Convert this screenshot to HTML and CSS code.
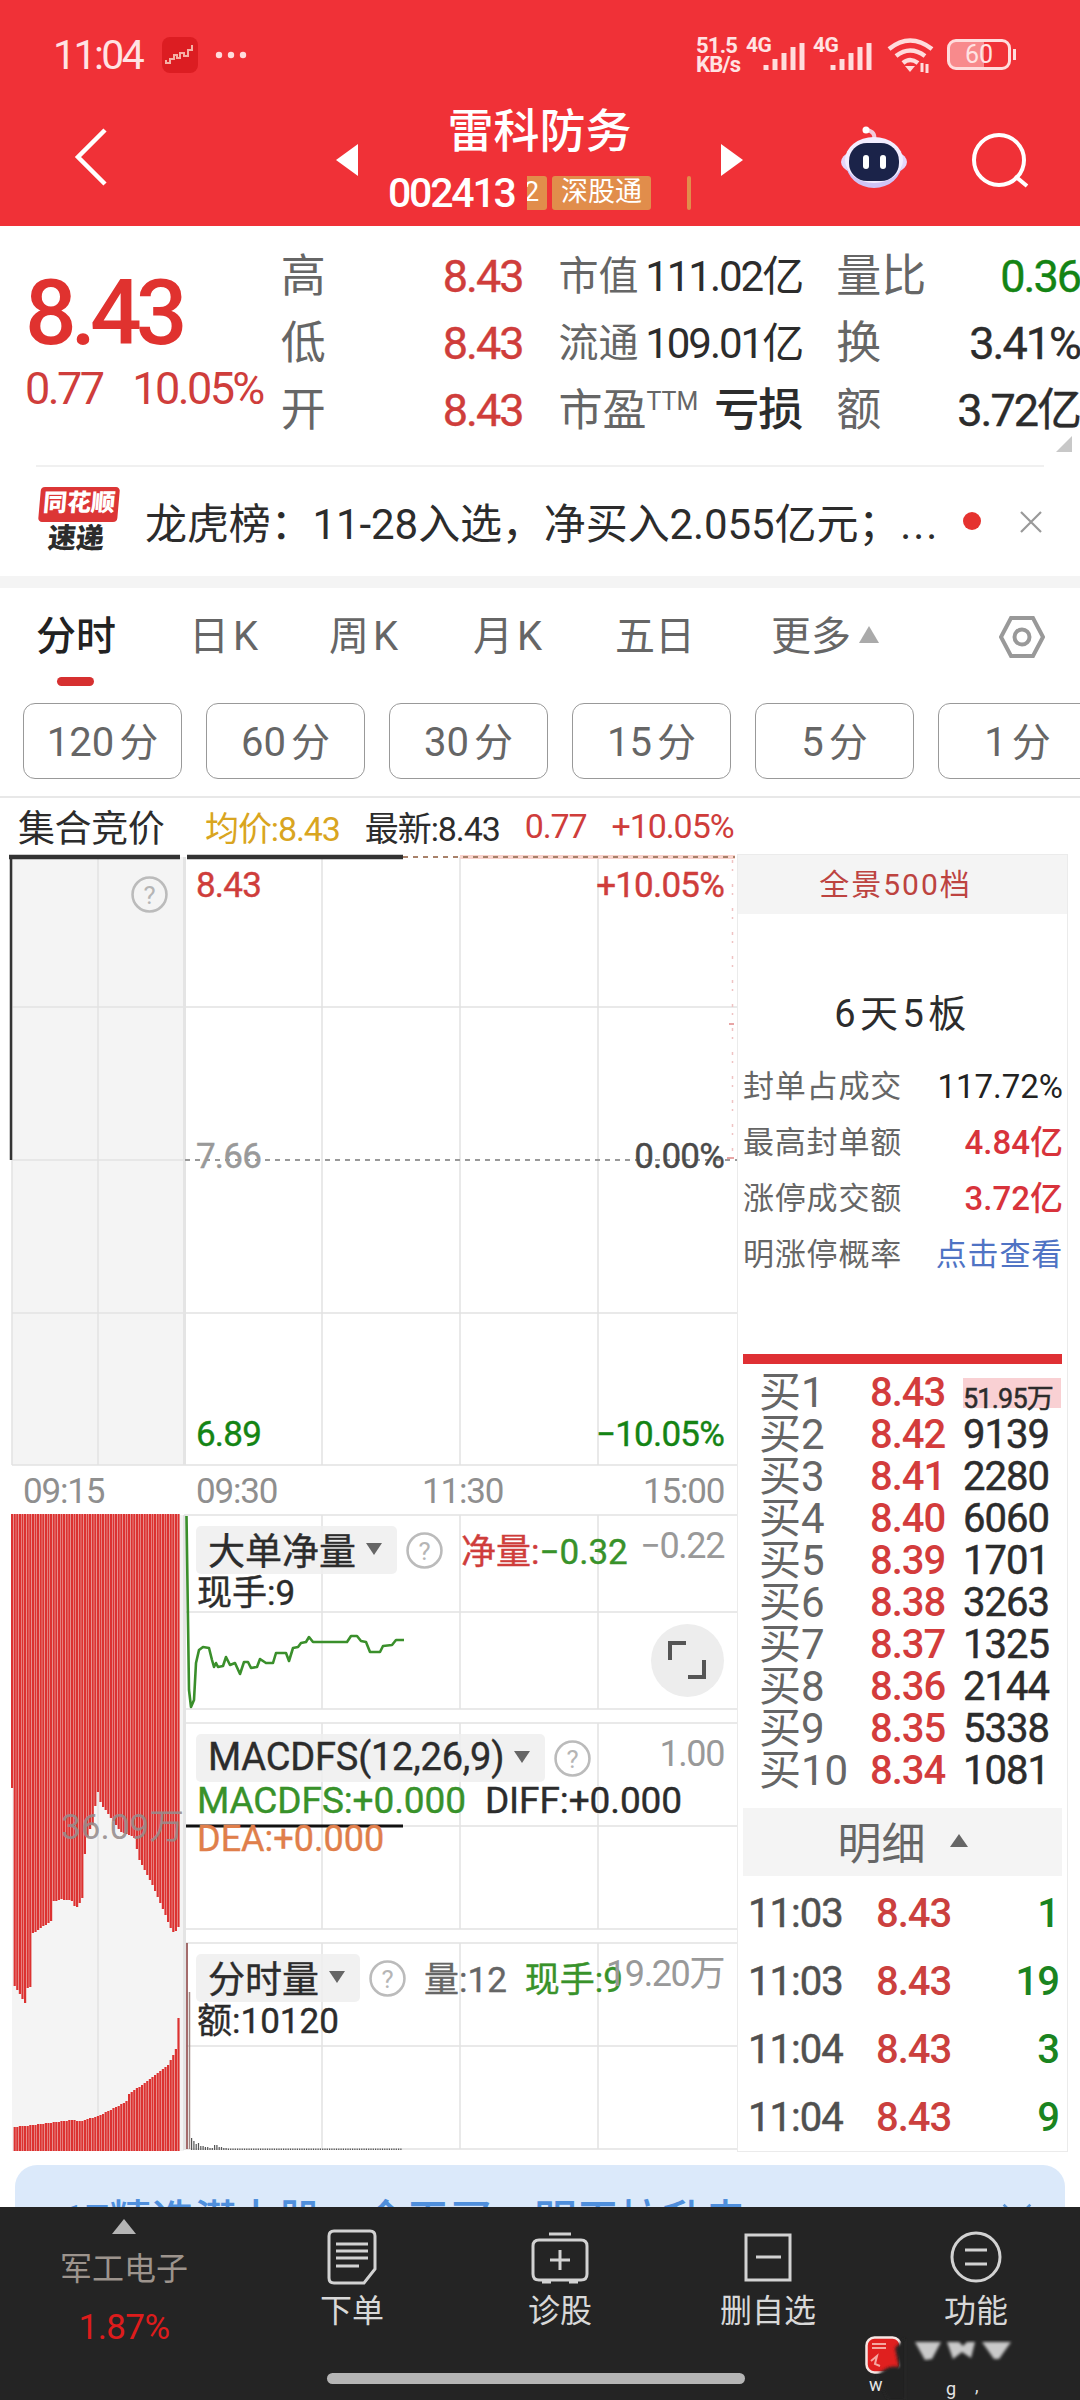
FILE: index.html
```html
<!DOCTYPE html>
<html lang="zh-CN">
<head>
  <meta charset="UTF-8" />
  <meta name="viewport" content="width=device-width, initial-scale=1.0"/>
  <title>雷科防务 002413</title>
  <link rel="stylesheet" href="styles.css">
</head>
<body>

  <header>
    <div class="status">
      <span class="clock">11:04</span>
      <svg class="app-icon" width="36" height="36" viewBox="0 0 36 36"><rect width="36" height="36" rx="8" fill="#dc1d22"/><path d="M4 23v3h4v-4h4v-4h3v3h3v-5h4v3h4v-6h4V8" fill="none" stroke="#f5b0a5" stroke-width="2"/></svg>
      <svg class="dots" width="32" height="8"><circle cx="4" cy="4" r="3.2"/><circle cx="16" cy="4" r="3.2"/><circle cx="28" cy="4" r="3.2"/></svg>
      <span class="speed">51.5<br>KB/s</span>
      <span class="sim">4G</span>
      <svg class="signal" width="44" height="36" viewBox="16 0 44 36"><path d="M19 33v-5M28 33V22M37 33V16M46 33V10M55 33V6"/></svg>
      <span class="sim">4G</span>
      <svg class="signal" width="44" height="36" viewBox="16 0 44 36"><path d="M19 33v-5M28 33V22M37 33V16M46 33V10M55 33V6"/></svg>
      <svg class="wifi" width="48" height="36" viewBox="0 0 48 36"><path d="M2 12Q23 -5 45 12M9 19Q23 8 38 19M16 26Q23 20 31 26" fill="none" stroke="#ffdcdc" stroke-width="4.5"/><path d="M18 29h10l-5 6z" fill="#ffdcdc"/><path d="M35 26v9M40 27v9" stroke="#ffdcdc" stroke-width="3"/></svg>
      <span class="battery">60</span>
    </div>
    <div class="titlebar">
      <svg class="back" width="34" height="60" viewBox="0 0 34 60"><path d="M31 3L4 30L31 57"/></svg>
      <svg class="prev" width="22" height="32"><path d="M22 0v32L0 16z" fill="#fff"/></svg>
      <div class="stock">
        <h1>雷科防务</h1>
        <div class="code-line">
          <span class="code">002413</span>
          <span class="tags"><i class="tag cut">2</i><i class="tag">深股通</i><i class="tag edge"></i></span>
        </div>
      </div>
      <svg class="next" width="22" height="32"><path d="M0 0v32l22-16z" fill="#fff"/></svg>
      <svg class="robot" width="66" height="64" viewBox="0 0 66 64">
        <path d="M33 14Q35 6 26 4" fill="none" stroke="#f3c9da" stroke-width="4" stroke-linecap="round"/>
        <circle cx="25" cy="4" r="3.5" fill="#fff"/>
        <ellipse cx="33" cy="36" rx="33" ry="15" fill="#e4d6fa"/>
        <ellipse cx="33" cy="37" rx="28" ry="25" fill="#cfc4f6"/>
        <ellipse cx="33" cy="34" rx="29" ry="23" fill="#f3edff"/>
        <rect x="8" y="17" width="50" height="38" rx="18" fill="#1b2349"/>
        <rect x="22" y="29" width="6" height="14" rx="3" fill="#fff"/><rect x="39" y="29" width="6" height="14" rx="3" fill="#fff"/>
      </svg>
      <svg class="search" width="58" height="58" viewBox="0 0 58 58"><circle cx="28" cy="28" r="25"/><path d="M44 44L56 54"/></svg>
    </div>
  </header>

  <section class="quote">
    <div class="price">
      <div class="now">8.43</div>
      <div class="change"><span>0.77</span><span>10.05%</span></div>
    </div>
    <dl class="col-a">
      <div><dt>高</dt><dd class="red">8.43</dd></div>
      <div><dt>低</dt><dd class="red">8.43</dd></div>
      <div><dt>开</dt><dd class="red">8.43</dd></div>
    </dl>
    <dl class="col-b">
      <div><dt>市值</dt><dd>111.02亿</dd></div>
      <div><dt>流通</dt><dd>109.01亿</dd></div>
      <div><dt class="pe">市盈<sup>TTM</sup></dt><dd class="loss">亏损</dd></div>
    </dl>
    <dl class="col-c">
      <div><dt>量比</dt><dd class="green">0.36</dd></div>
      <div><dt>换</dt><dd>3.41%</dd></div>
      <div><dt>额</dt><dd>3.72亿</dd></div>
    </dl>
    <i class="corner"></i>
  </section>

  <section class="news">
    <div class="news-logo"><b>同花顺</b><em>速递</em></div>
    <p>龙虎榜：11-28入选，净买入2.055亿元；<span>...</span></p>
    <i class="dot"></i>
    <svg width="24" height="24" viewBox="0 0 24 24"><path d="M2 2l20 20M22 2L2 22" stroke="#999" stroke-width="2.2"/></svg>
  </section>

  <nav class="tabs">
    <a class="active">分时</a>
    <a>日<u>K</u></a>
    <a>周<u>K</u></a>
    <a>月<u>K</u></a>
    <a>五日</a>
    <a class="more">更多<i></i></a>
    <svg width="46" height="44" viewBox="0 0 46 44"><path d="M12 3h22l10 19-10 19H12L2 22z"/><circle cx="23" cy="22" r="7.5"/></svg>
  </nav>

  <div class="periods">
    <button><u>120</u>分</button>
    <button><u>60</u>分</button>
    <button><u>30</u>分</button>
    <button><u>15</u>分</button>
    <button><u>5</u>分</button>
    <button><u>1</u>分</button>
  </div>

  <div class="summary">
    <span class="auction">集合竞价</span>
    <span class="avg">均价:8.43</span>
    <span>最新:8.43</span>
    <span class="red">0.77</span>
    <span class="red">+10.05%</span>
  </div>

  <main>
    <div class="charts">
      <!-- grid lines and series, drawn under the labels -->
      <svg class="plot" width="737" height="1298" viewBox="0 854 737 1298">
        <rect x="12" y="857" width="172" height="608" fill="#f4f4f4"/>
        <rect x="12" y="1515" width="172" height="636" fill="#f4f4f4"/>
        <path class="grid" d="M12 857V1465M98 857V1465M12 1007H737M12 1160H184M12 1313H737M12 1465H737M322 857V1465M460 857V1465M598 857V1465M98 1515V2150"/>
        <path class="grid" d="M184 1515H737M184 1612H737M184 1709H737M184 1723H737M184 1826H737M184 1929H737M184 1943H737M184 2046H737M184 2149H737"/>
        <path class="grid" d="M322 1515V1709M460 1515V1709M598 1515V1709M322 1723V1929M460 1723V1929M598 1723V1929M322 1943V2149M460 1943V2149M598 1943V2149"/>
        <path d="M184.500 857V1465M184.500 1515V2150" stroke="#e4e4e4" stroke-width="3"/>
        <path d="M460 857H735" stroke="#f9d3cc" stroke-width="4"/>
        <path d="M403 857H735" stroke="#a8816a" stroke-width="2" stroke-dasharray="5 5"/>
        <path d="M185 1160H737" stroke="#999" stroke-width="2" stroke-dasharray="5 5"/>
        <path d="M732.500 860V1160" stroke="#efc3c3" stroke-width="1.500" stroke-dasharray="3 6 2 13"/>
        <path d="M729 1024h5M727 1158h7" stroke="#e8a5a5" stroke-width="2"/>
        <path d="M11 1160V857" stroke="#333" stroke-width="2.500"/>
        <path d="M9 857H180M187 857H403" stroke="#333" stroke-width="4.500"/>
        <g id="auctionBars" fill="#dc3231"></g>
        <path fill="none" stroke="#3a8f2b" stroke-width="2.600" stroke-linejoin="round" d="M186.500 1516L189 1690L191 1707L194 1700L196 1663L199 1650L203 1647L209 1648L212 1660L214 1667L216 1663L218 1667L223 1666L226 1657L230 1665L235 1663L240 1674L244 1662L248 1662L251 1668L257 1667L260 1659L266 1663L273 1663L276 1653L286 1653L289 1661L293 1648L298 1647L301 1643L306 1642L309 1637L313 1642H347L351 1636H357L361 1641L366 1642L370 1652H380L383 1646L392 1645L396 1640H404"/>
        <path d="M186 1826H403" stroke="#111" stroke-width="3"/>
        <path d="M187 1943V2149" stroke="#9a5c5c" stroke-width="1.800"/>
        <path d="M189.500 1992V2149" stroke="#a08a84" stroke-width="1.500"/>
        <g id="volumeBars" fill="#555"></g>
      </svg>

      <div class="minute">
        <svg class="help" viewBox="0 0 36 36"><circle cx="18" cy="18" r="16.500"/><text x="18" y="27">?</text></svg>
        <div class="axis"><span class="red">8.43</span><span class="red">+10.05%</span></div>
        <div class="axis mid"><span>7.66</span><span>0.00%</span></div>
        <div class="axis"><span class="green">6.89</span><span class="green">−10.05%</span></div>
      </div>
      <div class="times"><span>09:15</span><span>09:30</span><span>11:30</span><span>15:00</span></div>

      <div class="lower">
        <div class="match"><span>36.09万</span></div>
        <div class="panels">
          <div class="panel net">
            <div class="row"><span class="chip">大单净量<i></i></span><svg class="help" viewBox="0 0 36 36"><circle cx="18" cy="18" r="16.500"/><text x="18" y="27">?</text></svg><span class="val"><b class="red">净量:</b><b class="lime">−0.32</b></span></div>
            <div class="row two">现手:9</div>
            <span class="scale">−0.22</span>
            <span class="expand"><svg width="38" height="38" viewBox="0 0 38 38"><path d="M2 19V2h16M36 19v17H20"/></svg></span>
          </div>
          <div class="panel macd">
            <div class="row"><span class="chip">MACDFS(12,26,9)<i></i></span><svg class="help" viewBox="0 0 36 36"><circle cx="18" cy="18" r="16.500"/><text x="18" y="27">?</text></svg></div>
            <div class="row two"><span class="lime">MACDFS:+0.000</span><span>DIFF:+0.000</span></div>
            <div class="row three">DEA:+0.000</div>
            <span class="scale">1.00</span>
          </div>
          <div class="panel vol">
            <span class="scale">19.20万</span>
            <div class="row"><span class="chip">分时量<i></i></span><svg class="help" viewBox="0 0 36 36"><circle cx="18" cy="18" r="16.500"/><text x="18" y="27">?</text></svg><span class="val"><b class="gray">量:12</b><b class="lime hand">现手:9</b></span></div>
            <div class="row two">额:10120</div>
          </div>
        </div>
      </div>
    </div>

    <aside>
      <div class="depth">全景500档</div>
      <h2>6天5板</h2>
      <ul class="limit">
        <li>封单占成交<b>117.72%</b></li>
        <li>最高封单额<b class="crimson">4.84亿</b></li>
        <li>涨停成交额<b class="crimson">3.72亿</b></li>
        <li>明涨停概率<a>点击查看</a></li>
      </ul>
      <div class="redbar"></div>
      <ul class="bids">
        <li><span>买1</span><b>8.43</b><em class="big">51.95万</em></li>
        <li><span>买2</span><b>8.42</b><em>9139</em></li>
        <li><span>买3</span><b>8.41</b><em>2280</em></li>
        <li><span>买4</span><b>8.40</b><em>6060</em></li>
        <li><span>买5</span><b>8.39</b><em>1701</em></li>
        <li><span>买6</span><b>8.38</b><em>3263</em></li>
        <li><span>买7</span><b>8.37</b><em>1325</em></li>
        <li><span>买8</span><b>8.36</b><em>2144</em></li>
        <li><span>买9</span><b>8.35</b><em>5338</em></li>
        <li><span>买10</span><b>8.34</b><em>1081</em></li>
      </ul>
      <div class="detail">明细<i></i></div>
      <ul class="trades">
        <li><span>11:03</span><b>8.43</b><em>1</em></li>
        <li><span>11:03</span><b>8.43</b><em>19</em></li>
        <li><span>11:04</span><b>8.43</b><em>3</em></li>
        <li><span>11:04</span><b>8.43</b><em>9</em></li>
      </ul>
    </aside>
  </main>

  <div class="banner"><span>17精选潜力股，今天买，明天拉升走</span><svg width="32" height="32" viewBox="0 0 36 36"><path d="M3 3l30 30M33 3L3 33" stroke="#5b95d6" stroke-width="3"/></svg></div>

  <footer>
    <div class="sector"><i></i><span>军工电子</span><b>1.87%</b></div>
    <div class="item">
      <svg width="50" height="56" viewBox="0 0 50 56"><path d="M7 2h36q5 0 5 5v33L37 54H7q-5 0-5-5V7q0-5 5-5zM9 15h32M9 22h32M9 29h32M9 37h23"/></svg>
      <span>下单</span>
    </div>
    <div class="item">
      <svg width="58" height="56" viewBox="0 0 58 56"><path d="M18 5h22M8 11h42q6 0 6 6v28q0 6-6 6H8q-6 0-6-6V17q0-6 6-6zM29 21v20M19 31h20M11 53h9M38 53h9"/></svg>
      <span>诊股</span>
    </div>
    <div class="item">
      <svg width="48" height="56" viewBox="0 0 48 56"><path d="M2 6h44v45H2zM12 28h25"/></svg>
      <span>删自选</span>
    </div>
    <div class="item">
      <svg width="52" height="56" viewBox="0 0 52 56"><circle cx="26" cy="28" r="24"/><path d="M15 21h22M15 35h22"/></svg>
      <span>功能</span>
    </div>
    <div class="home"></div>
    <svg class="mark" width="215" height="66" viewBox="0 0 215 66">
      <defs><filter id="smear"><feGaussianBlur stdDeviation="1.500"/></filter></defs>
      <rect x="1.500" y="3.500" width="34" height="35" rx="8" fill="#e0201f" stroke="#f5e6e4" stroke-width="2.500"/>
      <path d="M6 27l6-5-2 8 5 2M7 10h14M7 14h14" stroke="#f5a7a0" stroke-width="2" fill="none"/>
      <g fill="#c9c9c9" filter="url(#smear)"><path d="M50 8h26l-9 17-7 1zM82 8h12l4 4 4-4h8l-4 16-9-6-9 7zM117 8h29l-12 17h-5z"/></g>
      <path d="M12 42Q22 30 34 33L30 14 40 4V66H24Q16 54 12 42z" fill="#242424" filter="url(#smear)"/>
      <text x="4" y="57">w</text><text x="81" y="61">g</text><text x="110" y="58">,</text>
    </svg>
  </footer>

  <script src="chart.js"></script>
</body>
</html>
```
FILE: styles.css
```css
* {
  box-sizing: border-box;
}

body {
  margin: 0;
  width: 1080px;
  height: 2400px;
  overflow: hidden;
  background: #fff;
  color: #2c2c2c;
  font-family: Roboto, "Noto Sans CJK SC", sans-serif;
}

h1, h2, p, ul, dl, dd {
  margin: 0;
  padding: 0;
}

ul {
  list-style: none;
}

i, em {
  font-style: normal;
}

u {
  text-decoration: none;
}

b {
  font-weight: 500;
}

.red { color: #cf3d3b; }
.crimson { color: #d8333b; }
.green { color: #148414; }
.lime { color: #38922a; }
.gray { color: #666; }

/* header */
header {
  height: 226px;
  background: #f03137;
  color: #fff;
}

.status {
  display: flex;
  align-items: center;
  height: 73px;
  padding: 36px 0 0 53px;
  color: #ffe3e3;
}

.clock {
  width: 109px;
  font-size: 41px;
  letter-spacing: -2.6px;
}

.dots {
  margin-left: 17px;
  fill: #ffdcdc;
}

.speed {
  margin-left: 449px;
  width: 50px;
  font-size: 22px;
  line-height: 19px;
  font-weight: 700;
  letter-spacing: -0.8px;
}

.sim {
  align-self: flex-start;
  width: 17px;
  font-size: 21px;
  line-height: 18px;
  font-weight: 700;
  letter-spacing: -0.5px;
  white-space: nowrap;
}

.signal {
  width: 44px;
  margin-right: 6px;
  fill: none;
  stroke: #ffdcdc;
  stroke-width: 5;
}

.wifi {
  margin-left: 7px;
}

.battery {
  position: relative;
  margin-left: 12px;
  width: 64px;
  height: 31px;
  border: 3px solid #ffdcdc;
  border-radius: 9px;
  background: linear-gradient(90deg, #f88a8c 58%, transparent 58%);
  font-size: 25px;
  line-height: 26px;
  text-align: center;
}

.battery::after {
  content: "";
  position: absolute;
  right: -8px;
  top: 7px;
  width: 3px;
  height: 11px;
  background: #ffdcdc;
}

.titlebar {
  display: flex;
  align-items: flex-start;
}

.back {
  margin: 54px 0 0 74px;
  fill: none;
  stroke: #fff;
  stroke-width: 4.5;
}

.prev {
  margin: 71px 0 0 228px;
}

.next {
  margin-top: 71px;
}

.stock {
  width: 363px;
  padding-top: 29px;
}

.stock h1 {
  font-size: 46px;
  font-weight: 500;
  line-height: 58px;
  text-align: center;
}

.code-line {
  display: flex;
  align-items: center;
  height: 34px;
  margin-top: 16px;
  padding-left: 30px;
}

.code {
  width: 139px;
  font-size: 41px;
  font-weight: 500;
  letter-spacing: -2.2px;
}

.tags {
  display: flex;
  gap: 5px;
}

.tag {
  height: 34px;
  padding: 0 9px;
  border-radius: 3px;
  background: #e18d4b;
  font-size: 27px;
  line-height: 33px;
}

.tag.cut {
  width: 20px;
  padding: 0;
  border-radius: 0 3px 3px 0;
  text-indent: -3px;
  overflow: hidden;
}

.tag.edge {
  width: 4px;
  margin-left: 31px;
  padding: 0;
}

.robot {
  margin: 53px 0 0 98px;
}

.search {
  margin: 59px 0 0 64px;
  fill: none;
  stroke: #fff;
  stroke-width: 4;
}

/* quote */
.quote {
  position: relative;
  display: flex;
  height: 241px;
}

.quote::after {
  content: "";
  position: absolute;
  left: 36px;
  right: 36px;
  bottom: 0;
  height: 2px;
  background: #f0f0f0;
}

.price {
  width: 281px;
  padding: 37px 0 0 25px;
  color: #cf3d3b;
}

.now {
  font-size: 91px;
  line-height: 100px;
  font-weight: 500;
  letter-spacing: -6px;
  color: #e0322f;
}

.change {
  display: flex;
  gap: 30px;
  font-size: 45px;
  line-height: 52px;
  letter-spacing: -2.6px;
}

.quote dl {
  padding-top: 17px;
}

.quote dl div {
  display: flex;
  justify-content: space-between;
  align-items: center;
  height: 67px;
}

.quote dt {
  font-size: 45px;
  line-height: 60px;
  color: #666;
}

.quote dd {
  font-size: 45px;
  line-height: 60px;
  font-weight: 500;
  letter-spacing: -2px;
}

.quote .col-a {
  width: 242px;
}

.quote .col-a dd,
.quote .col-c dd {
  font-weight: 400;
  -webkit-text-stroke: 0.4px;
}

.quote .col-b {
  width: 244px;
  margin-left: 36px;
}

.quote .col-b dt {
  font-size: 40px;
}

.quote .col-b dd {
  font-size: 42px;
  font-weight: 400;
}

.quote .col-b dt.pe {
  font-size: 44px;
}

.pe sup {
  font-size: 25px;
  line-height: 20px;
}

.quote .col-b dd.loss {
  font-size: 45px;
  font-weight: 500;
  letter-spacing: -1px;
}

.quote .col-c {
  width: 244px;
  margin-left: 34px;
}

.corner {
  position: absolute;
  right: 8px;
  bottom: 15px;
  border-left: 16px solid transparent;
  border-bottom: 16px solid #c8c8c8;
}

/* news */
.news {
  display: flex;
  align-items: center;
  height: 121px;
  padding-left: 38px;
  border-bottom: 12px solid #f4f4f4;
}

.news-logo {
  width: 79px;
  margin-right: 28px;
  padding-top: 2px;
  line-height: 33px;
  text-align: center;
  transform: skewX(-5deg);
}

.news-logo b {
  display: block;
  height: 35px;
  border-radius: 4px;
  background: #dc3636;
  color: #fff;
  font-size: 24px;
  font-weight: 900;
}

.news-logo em {
  font-size: 28px;
  font-weight: 900;
}

.news p {
  width: 815px;
  padding-bottom: 3px;
  font-size: 42px;
  letter-spacing: -0.1px;
  white-space: nowrap;
}

.news p span {
  letter-spacing: 2px;
}

.dot {
  width: 18px;
  height: 18px;
  margin-left: 3px;
  margin-bottom: 2px;
  border-radius: 50%;
  background: #e5322f;
}

.news svg {
  margin-left: 38px;
}

/* tabs */
.tabs {
  display: flex;
  position: relative;
  height: 100px;
  padding: 20px 0 0 36px;
  font-size: 40px;
  line-height: 58px;
  color: #666;
}

.tabs a {
  white-space: nowrap;
}

.tabs u {
  margin-left: 4px;
}

.tabs a:nth-child(1) { width: 153px; }
.tabs a:nth-child(2) { width: 140px; }
.tabs a:nth-child(3) { width: 144px; }
.tabs a:nth-child(4) { width: 142px; }
.tabs a:nth-child(5) { width: 156px; }
.tabs a:nth-child(6) { width: 228px; }

.tabs .active {
  position: relative;
  font-weight: 500;
  color: #222;
}

.tabs .active::after {
  content: "";
  position: absolute;
  left: 21px;
  top: 69px;
  width: 37px;
  height: 9px;
  border-radius: 5px;
  background: #d63030;
}

.more i {
  display: inline-block;
  margin: 0 0 7px 8px;
  border: 10px solid transparent;
  border-top: 0;
  border-bottom: 17px solid #aaa;
}

.tabs svg {
  margin-top: 7px;
  fill: none;
  stroke: #999;
  stroke-width: 4;
}

.periods {
  display: flex;
  gap: 24px;
  height: 110px;
  padding: 15px 0 0 23px;
  border-bottom: 2px solid #e8e8e8;
  overflow: hidden;
}

.periods button {
  flex: 0 0 159px;
  height: 76px;
  padding: 0 0 5px;
  border: 1.5px solid #999;
  border-radius: 12px;
  background: #fff;
  color: #666;
  font-family: inherit;
  font-size: 39px;
}

.periods u {
  margin-right: 5px;
  font-size: 40px;
}

.summary {
  display: flex;
  align-items: center;
  height: 56px;
  padding-left: 18px;
  font-size: 34px;
  letter-spacing: -1.1px;
}

.summary span {
  margin-right: 25px;
  white-space: nowrap;
}

.summary .auction {
  width: 163px;
  margin-right: 24px;
  font-size: 37px;
  letter-spacing: -0.4px;
}

.summary .avg {
  color: #d9a520;
}

/* charts */
main {
  display: flex;
}

.charts {
  position: relative;
  width: 737px;
  height: 1298px;
}

.plot {
  position: absolute;
  left: 0;
  top: 0;
}

.grid {
  fill: none;
  stroke: #e2e2e2;
  stroke-width: 1.5;
}

.minute {
  position: relative;
  display: flex;
  flex-direction: column;
  justify-content: space-between;
  height: 611px;
  padding: 11px 13px 9px 196px;
  font-size: 35px;
  line-height: 42px;
}

.help {
  width: 37px;
  height: 37px;
  fill: none;
  stroke: #bbb;
  stroke-width: 2.5;
}

.help text {
  fill: #b5b5b5;
  stroke: none;
  font-size: 25px;
  text-anchor: middle;
}

.minute .help {
  position: absolute;
  left: 131px;
  top: 22px;
}

.axis {
  display: flex;
  justify-content: space-between;
  letter-spacing: -0.8px;
  -webkit-text-stroke: 0.4px;
}

.mid {
  margin-bottom: 8px;
  color: #4a4a4a;
}

.mid span:first-child {
  color: #999;
}

.times {
  position: relative;
  display: flex;
  height: 50px;
  padding-left: 23px;
  font-size: 35px;
  line-height: 54px;
  letter-spacing: -1.2px;
  color: #8f8f8f;
}

.times span:nth-child(1) { width: 173px; }
.times span:nth-child(2) { width: 226px; }
.times span:nth-child(3) { width: 221px; }

.lower {
  position: relative;
  display: flex;
}

.match {
  width: 184px;
  padding-top: 288px;
  font-size: 35px;
  line-height: 50px;
  text-align: right;
  color: rgba(150, 140, 140, 0.9);
}

.panels {
  flex: 1;
}

.panel {
  position: relative;
  height: 208px;
  padding: 11px 0 0 12px;
  font-size: 35px;
}

.panel.macd {
  height: 220px;
}

.row {
  display: flex;
  align-items: center;
  height: 48px;
  white-space: nowrap;
  -webkit-text-stroke: 0.4px;
}

.chip {
  display: flex;
  align-items: center;
  height: 48px;
  padding: 0 15px 2px 12px;
  margin-right: 9px;
  border-radius: 5px;
  background: rgba(238, 238, 238, 0.85);
  font-size: 37px;
}

.macd .chip {
  font-size: 38px;
  letter-spacing: -0.2px;
}

.chip i {
  margin-left: 10px;
  border: 8px solid transparent;
  border-bottom: 0;
  border-top: 12px solid #666;
}

.val {
  margin: 0 0 4px 18px;
}

.val b {
  font-weight: 400;
}

.hand {
  margin-left: 18px;
}

.row.two {
  height: 36px;
  padding: 0 0 6px 1px;
  gap: 19px;
}

.macd .row.two {
  padding-bottom: 0;
  font-size: 37px;
  letter-spacing: -0.1px;
}

.row.three {
  height: 42px;
  padding-left: 1px;
  font-size: 36px;
  color: #e07f4b;
}

.scale {
  position: absolute;
  right: 13px;
  top: 11px;
  font-size: 36px;
  line-height: 40px;
  letter-spacing: -1.4px;
  color: #999;
}

.expand {
  position: absolute;
  right: 13px;
  top: 109px;
  width: 73px;
  height: 73px;
  padding: 17px;
  border-radius: 50%;
  background: #ededed;
}

.expand path {
  fill: none;
  stroke: #555;
  stroke-width: 4;
}

/* order book */
aside {
  width: 331px;
  height: 1298px;
  border: 1.5px solid #ebebeb;
}

.depth {
  height: 59px;
  padding-right: 14px;
  background: #f4f4f4;
  color: #bd4340;
  font-size: 30px;
  line-height: 60px;
  letter-spacing: 2px;
  text-align: center;
}

aside h2 {
  padding-top: 73px;
  font-size: 38px;
  font-weight: 400;
  line-height: 54px;
  letter-spacing: 4.5px;
  text-align: center;
}

.limit {
  padding: 18px 4px 0 5px;
}

.limit li {
  display: flex;
  justify-content: space-between;
  height: 56px;
  color: #666;
  font-size: 31px;
  line-height: 56px;
  letter-spacing: 0.8px;
}

.limit b {
  color: #222;
  font-size: 33px;
  font-weight: 400;
  letter-spacing: 0;
}

.limit b.crimson {
  color: #d8333b;
  font-weight: 500;
}

.limit a {
  color: #4f73c4;
}

.redbar {
  height: 10px;
  margin: 71px 5px 0 5px;
  background: #df3034;
}

.bids {
  padding: 8px 4px 0 21px;
}

.bids li {
  display: flex;
  height: 42px;
  font-size: 40px;
  line-height: 42px;
  letter-spacing: -1px;
}

.bids span {
  width: 111px;
  color: #666;
  font-size: 42px;
  letter-spacing: 0;
}

.bids b {
  width: 93px;
  color: #d33c3c;
}

.bids em {
  width: 98px;
  padding-right: 13px;
  text-align: right;
  -webkit-text-stroke: 0.5px;
}

.bids .big {
  height: 30px;
  margin-top: 6px;
  padding: 0;
  background: #f9d0d3;
  font-size: 27px;
  line-height: 42px;
  letter-spacing: -0.8px;
  text-align: left;
}

.detail {
  display: flex;
  align-items: center;
  justify-content: center;
  gap: 24px;
  height: 68px;
  margin: 16px 5px 0 5px;
  padding-bottom: 3px;
  background: #f4f4f4;
  color: #666;
  font-size: 44px;
}

.detail i {
  border: 9px solid transparent;
  border-top: 0;
  border-bottom: 13px solid #666;
}

.trades {
  padding: 3px 8px 0 10px;
}

.trades li {
  display: flex;
  height: 68px;
  font-size: 40px;
  line-height: 70px;
  letter-spacing: -1px;
}

.trades span {
  width: 128px;
  color: #505050;
  -webkit-text-stroke: 0.5px;
}

.trades b {
  color: #cb403e;
}

.trades em {
  margin-left: auto;
  font-weight: 500;
  color: #1a8420;
}

.banner {
  display: flex;
  justify-content: space-between;
  height: 42px;
  margin: 13px 15px 0;
  padding: 33px 32px 0 46px;
  border-radius: 22px 22px 0 0;
  background: #dbe9fa;
  color: #4f8fdc;
  font-size: 42.5px;
  line-height: 46px;
  font-weight: 500;
  overflow: hidden;
}

.banner svg {
  margin-top: 4px;
}

/* bottom bar */
footer {
  position: relative;
  display: flex;
  height: 193px;
  background: #242424;
  color: #d8d8d8;
  font-size: 32px;
  line-height: 46px;
}

.sector {
  display: flex;
  flex-direction: column;
  align-items: center;
  width: 248px;
  padding-top: 12px;
  color: #9d948d;
}

.sector i {
  border: 12px solid transparent;
  border-top: 0;
  border-bottom: 15px solid #b5b5b5;
}

.sector span {
  margin-top: 12px;
}

.sector b {
  margin-top: 13px;
  font-size: 35px;
  font-weight: 400;
  letter-spacing: -0.6px;
  color: #dd1c1c;
}

.item {
  display: flex;
  flex-direction: column;
  align-items: center;
  width: 208px;
  padding-top: 22px;
}

.item svg {
  fill: none;
  stroke: #d2d2d2;
  stroke-width: 3;
}

.item span {
  margin-top: 3px;
}

.home {
  position: absolute;
  left: 327px;
  bottom: 16px;
  width: 418px;
  height: 11px;
  border-radius: 6px;
  background: #b5b5b5;
}

.mark {
  position: absolute;
  right: 0;
  bottom: 0;
}

.mark text {
  fill: #e5e5e5;
  font-size: 18px;
}
```
FILE: chart.js
```js
// [x, y] outlines of the auction bars, with a hairline between the bars
const matched = [[11,1788],[13,1788],[13.1,1985],[24,2003],[26,1988],[30,1987],[31,1934],[50,1921],[51,1902],[60,1899],[71,1901],[75,1909],[82,1897],[83,1859],[87,1833],[93,1822],[95,1796],[97,1792],[100,1804],[120,1832],[133,1837],[138,1859],[150,1882],[163,1912],[171,1932],[177,1930],[180,1911]];
const unmatched = [[12,2127],[33,2125],[72,2120],[80,2121],[97,2116],[125,2102],[128,2094],[153,2076],[167,2065],[173,2054],[176,2045],[177,2018],[181,2018]];

function yAt(points, x) {
  for (let i = 1; i < points.length; i++) {
    const [x0, y0] = points[i - 1];
    const [x1, y1] = points[i];
    if (x <= x1) return y0 + (y1 - y0) * Math.max(0, (x - x0) / (x1 - x0));
  }
  return points[points.length - 1][1];
}

function rect(group, x, y, w, h) {
  const r = document.createElementNS("http://www.w3.org/2000/svg", "rect");
  r.setAttribute("x", x);
  r.setAttribute("y", y);
  r.setAttribute("width", w);
  r.setAttribute("height", h);
  group.appendChild(r);
}

const auction = document.getElementById("auctionBars");
for (let x = 11; x < 179; x += 2.6) {
  rect(auction, x, 1514, 2.2, Math.round(yAt(matched, x)) - 1514);
  if (x > 12) {
    const y = Math.round(yAt(unmatched, x));
    rect(auction, x, y, 2.2, 2151 - y);
  }
}

const volume = document.getElementById("volumeBars");
const heights = [12, 9, 6, 7, 4, 4, 3, 3, 2, 2, 5, 5, 3, 3, 2, 2];
for (let i = 0; i < 92; i++) {
  rect(volume, 191 + i * 2.3, 2150 - (heights[i] || 1.5), 1.2, heights[i] || 1.5);
}
```
